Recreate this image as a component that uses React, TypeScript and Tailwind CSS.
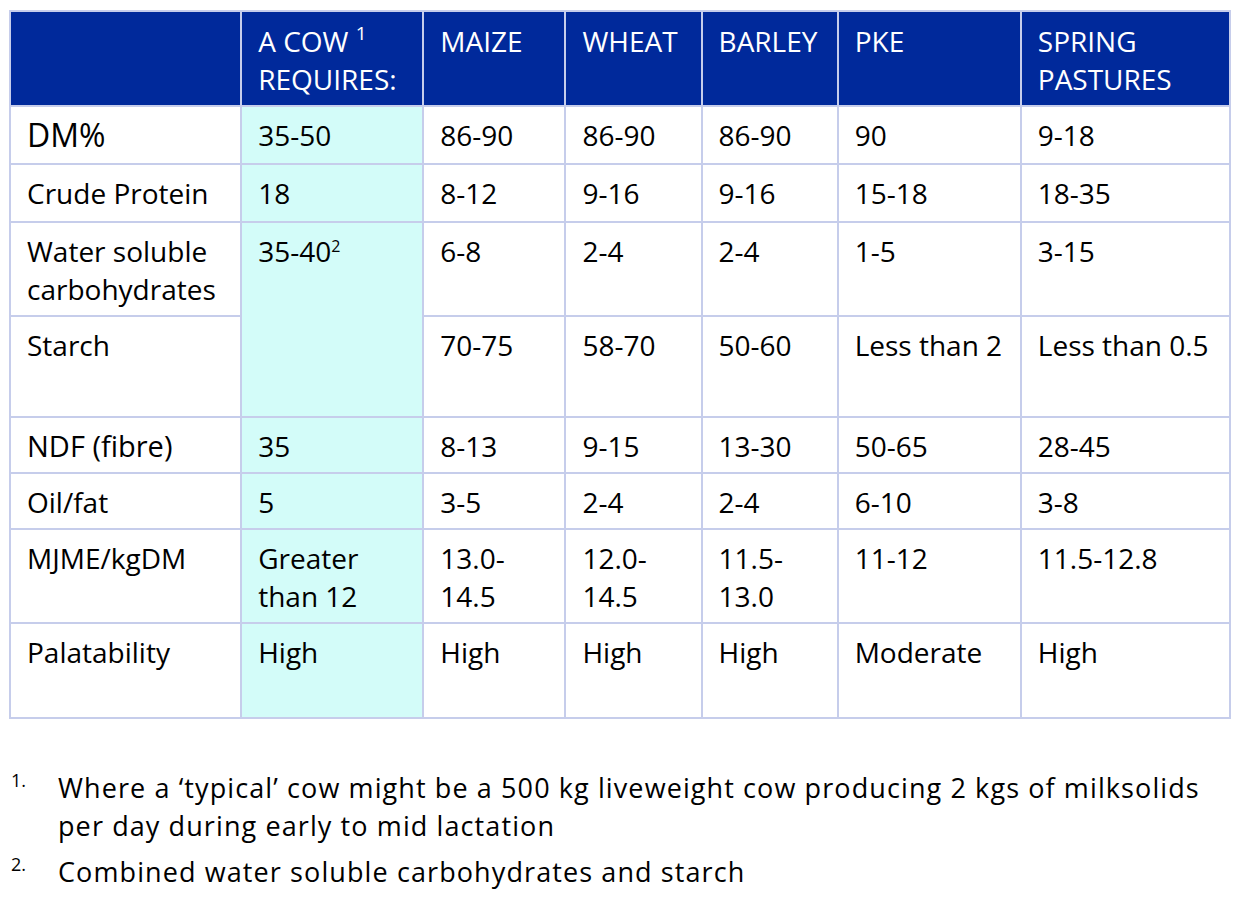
const columns = ["MAIZE", "WHEAT", "BARLEY", "PKE"];

type Row = {
  label: React.ReactNode;
  key: string;
  big?: "dm" | "ndf";
  cow?: React.ReactNode;
  cowSpan?: number;
  skipCow?: boolean;
  values: React.ReactNode[];
  h: string;
};

const rows: Row[] = [
  { key: "dm", label: "DM%", big: "dm", cow: "35-50", values: ["86-90", "86-90", "86-90", "90", "9-18"], h: "h-[58px]" },
  { key: "cp", label: "Crude Protein", cow: "18", values: ["8-12", "9-16", "9-16", "15-18", "18-35"], h: "h-[58px]" },
  {
    key: "wsc",
    label: (
      <>
        Water soluble
        <br />
        carbohydrates
      </>
    ),
    cow: (
      <>
        35-40
        <span className="relative top-[6px] align-top text-[16px] leading-[16px]">2</span>
      </>
    ),
    cowSpan: 2,
    values: ["6-8", "2-4", "2-4", "1-5", "3-15"],
    h: "h-[94px]",
  },
  { key: "st", label: "Starch", skipCow: true, values: ["70-75", "58-70", "50-60", "Less than 2", "Less than 0.5"], h: "h-[101px]" },
  { key: "ndf", label: "NDF (fibre)", big: "ndf", cow: "35", values: ["8-13", "9-15", "13-30", "50-65", "28-45"], h: "h-[56px]" },
  { key: "oil", label: "Oil/fat", cow: "5", values: ["3-5", "2-4", "2-4", "6-10", "3-8"], h: "h-[56px]" },
  {
    key: "mj",
    label: "MJME/kgDM",
    cow: (
      <>
        Greater
        <br />
        than 12
      </>
    ),
    values: [
      <>
        13.0-
        <br />
        14.5
      </>,
      <>
        12.0-
        <br />
        14.5
      </>,
      <>
        11.5-
        <br />
        13.0
      </>,
      "11-12",
      "11.5-12.8",
    ],
    h: "h-[94px]",
  },
  { key: "pal", label: "Palatability", cow: "High", values: ["High", "High", "High", "Moderate", "High"], h: "h-[95px]" },
];

const cell = "border-2 border-[#c6cdeb] align-top pl-[16px] pr-1 pt-[9px]";
const head = "border-2 border-[#c6cdeb] align-top pl-[16px] pr-1 pt-[10px] font-normal text-left";

export default function App() {
  return (
    <div className="bg-white min-h-[903px] w-[1240px] pt-[10px] pl-[9px] text-black font-['Open_Sans',sans-serif] text-[28px] leading-[38px]">
      <table className="table-fixed border-collapse w-[1222px]">
        <colgroup>
          <col className="w-[231px]" />
          <col className="w-[182px]" />
          <col className="w-[142px]" />
          <col className="w-[136px]" />
          <col className="w-[136px]" />
          <col className="w-[183px]" />
          <col className="w-[209px]" />
        </colgroup>
        <thead>
          <tr className="h-[95px] bg-[#00299b] text-white">
            <th className={head}></th>
            <th className={head}>
              A COW <span className="relative top-[2px] align-top text-[19px] leading-[19px]">1</span>
              <br />
              REQUIRES:
            </th>
            {columns.map((c) => (
              <th key={c} className={head}>
                {c}
              </th>
            ))}
            <th className={head}>
              SPRING
              <br />
              PASTURES
            </th>
          </tr>
        </thead>
        <tbody>
          {rows.map((r) => (
            <tr key={r.key} className={r.h}>
              <td className={cell + (r.big === "dm" ? " text-[32px]" : r.big === "ndf" ? " text-[29px]" : "")}>
                {r.label}
              </td>
              {!r.skipCow && (
                <td rowSpan={r.cowSpan} className={cell + " bg-[#d3fcf9]"}>
                  {r.cow}
                </td>
              )}
              {r.values.map((v, i) => (
                <td key={i} className={cell}>
                  {v}
                </td>
              ))}
            </tr>
          ))}
        </tbody>
      </table>

      <div className="mt-[50px] flex flex-col gap-[8px] text-[27px] tracking-[1.1px]">
        <div className="flex">
          <span className="w-[49px] shrink-0 pl-[2px] mt-[2px] text-[18px] leading-[18px] tracking-normal">1.</span>
          <p>
            Where a ‘typical’ cow might be a 500 kg liveweight cow producing 2 kgs of milksolids
            <br />
            per day during early to mid lactation
          </p>
        </div>
        <div className="flex">
          <span className="w-[49px] shrink-0 pl-[2px] mt-[2px] text-[18px] leading-[18px] tracking-normal">2.</span>
          <p>Combined water soluble carbohydrates and starch</p>
        </div>
      </div>
    </div>
  );
}
